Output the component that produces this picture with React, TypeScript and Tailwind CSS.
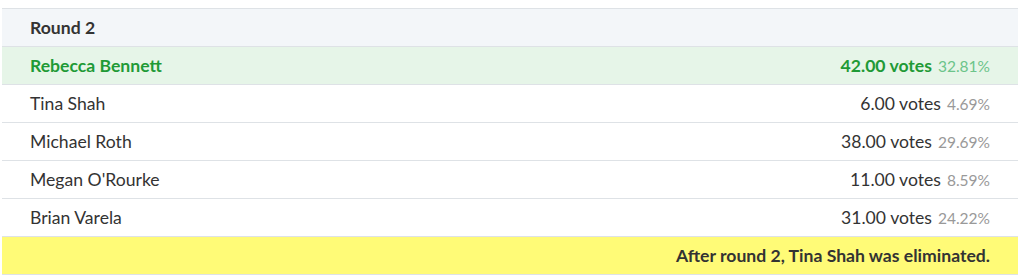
const rows = [
  { name: "Rebecca Bennett", votes: "42.00", pct: "32.81%", winner: true },
  { name: "Tina Shah", votes: "6.00", pct: "4.69%" },
  { name: "Michael Roth", votes: "38.00", pct: "29.69%" },
  { name: "Megan O'Rourke", votes: "11.00", pct: "8.59%" },
  { name: "Brian Varela", votes: "31.00", pct: "24.22%" },
];

export default function App() {
  return (
    <div className="min-h-[278px] bg-white px-[2px] pt-[8px] font-['Lato','Liberation_Sans',sans-serif] text-[17.6px] text-[#333]">
      <div className="w-[1016px] border-t border-[#dee2e6]">
        <div className="flex h-[38px] items-center border-b border-[#dee2e6] bg-[#f3f6f9] px-[28px] pt-[2px] font-bold">
          Round 2
        </div>
        {rows.map((r) => (
          <div
            key={r.name}
            className={
              r.winner
                ? "flex h-[38px] items-center justify-between border-b border-[#dee2e6] bg-[#e6f5e8] px-[28px] pt-[2px] font-bold text-[#1f9a36]"
                : "flex h-[38px] items-center justify-between border-b border-[#dee2e6] px-[28px] pt-[2px]"
            }
          >
            <span>{r.name}</span>
            <span className="flex items-baseline gap-[6px]">
              <span>{r.votes} votes</span>
              <span
                className={
                  r.winner
                    ? "text-[15.5px] font-normal text-[#6cc48a]"
                    : "text-[15.5px] text-[#999]"
                }
              >
                {r.pct}
              </span>
            </span>
          </div>
        ))}
        <div className="flex h-[38px] items-center justify-end border-b border-[#dee2e6] bg-[#fffb77] px-[28px] pt-[2px] font-bold">
          After round 2, Tina Shah was eliminated.
        </div>
      </div>
    </div>
  );
}
